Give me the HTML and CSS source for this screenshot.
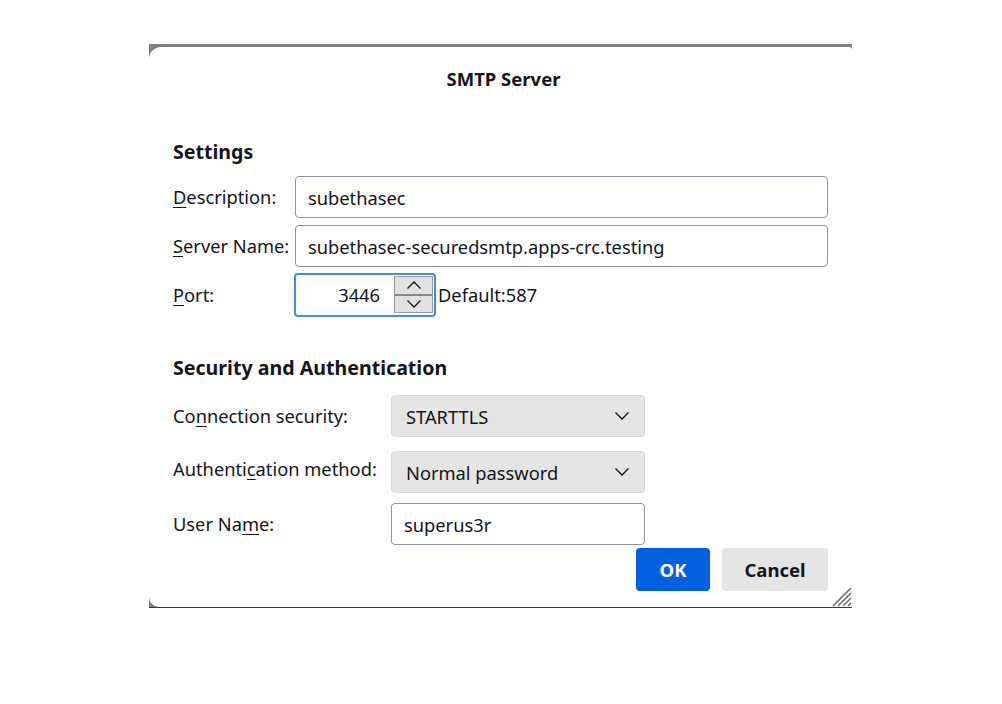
FILE: index.html
```html
<!DOCTYPE html>
<html>
<head>
<meta charset="utf-8">
<link rel="stylesheet" href="styles.css">
</head>
<body>
<div class="frame">
  <div class="dialog">
    <div class="title">SMTP Server</div>

    <div class="section-title first">Settings</div>
    <div class="settings">
      <label class="lbl"><u>D</u>escription:</label>
      <div class="textbox wide">subethasec</div>
      <label class="lbl"><u>S</u>erver Name:</label>
      <div class="textbox wide">subethasec-securedsmtp.apps-crc.testing</div>
      <label class="lbl"><u>P</u>ort:</label>
      <div class="port-row">
        <div class="port">
          <span class="port-val">3446</span>
          <div class="spin">
            <div class="spin-btn"><svg width="16" height="10" viewBox="0 0 16 10"><path d="M1.5 8.5 L8 2 L14.5 8.5" fill="none" stroke="#15141a" stroke-width="1.3"/></svg></div>
            <div class="spin-btn"><svg width="16" height="10" viewBox="0 0 16 10"><path d="M1.5 1.5 L8 8 L14.5 1.5" fill="none" stroke="#15141a" stroke-width="1.3"/></svg></div>
          </div>
        </div>
        <span class="default">Default:587</span>
      </div>
    </div>

    <div class="section-title second">Security and Authentication</div>
    <div class="security">
      <label class="lbl">Co<u>n</u>nection security:</label>
      <div class="select"><span>STARTTLS</span><svg width="16" height="10" viewBox="0 0 16 10"><path d="M1.5 1.5 L8 8 L14.5 1.5" fill="none" stroke="#15141a" stroke-width="1.4"/></svg></div>
      <label class="lbl auth">Authenti<u>c</u>ation method:</label>
      <div class="select"><span>Normal password</span><svg width="16" height="10" viewBox="0 0 16 10"><path d="M1.5 1.5 L8 8 L14.5 1.5" fill="none" stroke="#15141a" stroke-width="1.4"/></svg></div>
      <label class="lbl">User Na<u>m</u>e:</label>
      <div class="textbox">superus3r</div>
    </div>

    <div class="buttons">
      <button class="btn primary">OK</button>
      <button class="btn">Cancel</button>
    </div>
    <div class="grip"><svg width="22" height="22" viewBox="0 0 22 22"><path d="M21 3 L3 21 M21 8 L8 21 M21 13 L13 21 M21 18 L18 21" stroke="#6a6a6a" stroke-width="1.6"/></svg></div>
  </div>
</div>
</body>
</html>
```
FILE: styles.css
```css
* { box-sizing: border-box; }
body {
  margin: 0;
  background: #ffffff;
  font-family: "Noto Sans", "Open Sans", sans-serif;
  color: #15141a;
  font-size: 18.3px;
}
.frame {
  margin: 44px 0 0 149px;
  width: 703px;
  height: 564px;
  background: #7f7f7f;
  padding-top: 3px;
  border-bottom: 1px solid #3a3a3a;
}
.dialog {
  position: relative;
  width: 703px;
  height: 560px;
  background: #fff;
  border-radius: 12px 3px 0 10px;
  padding: 0 24px 0 24px;
}
.title {
  text-align: center;
  font-weight: 700;
  font-size: 18.5px;
  line-height: 24px;
  padding-top: 20px;
  padding-left: 6px;
}
.section-title {
  font-weight: 700;
  font-size: 19.6px;
  line-height: 26px;
}
.section-title.first { margin-top: 48px; }
.section-title.second { margin-top: 39px; }
.settings {
  display: grid;
  grid-template-columns: 122px 1fr;
  grid-auto-rows: 42px;
  row-gap: 7px;
  align-items: center;
  margin-top: 11px;
}
.lbl { line-height: 24px; }
u { text-decoration-thickness: 1px; text-underline-offset: 3px; }
.textbox {
  height: 42px;
  border: 1px solid #8f8f9d;
  border-radius: 4px;
  padding: 0 12px;
  display: flex;
  align-items: center;
  background: #fff;
}
.port-row {
  display: flex;
  align-items: center;
  margin-left: -1px;
  margin-top: -1px;
}
.port {
  width: 142px;
  height: 44px;
  border: 2px solid #3a8fe6;
  border-radius: 4px;
  display: flex;
  align-items: center;
  justify-content: flex-end;
  padding: 0 1px 0 0;
}
.port-val { margin-right: 14px; }
.spin {
  width: 39px;
  height: 37px;
  display: flex;
  flex-direction: column;
  border: 1px solid #9a9a9a;
  background: #e2e2e2;
}
.spin-btn {
  flex: 1;
  display: flex;
  align-items: center;
  justify-content: center;
}
.spin-btn + .spin-btn { border-top: 2px solid #8a8a8a; }
.default { margin-left: 2px; }
.security {
  display: grid;
  grid-template-columns: 218px 254px;
  align-items: center;
  margin-top: 14px;
}
.select {
  height: 42px;
  background: #e5e5e5;
  border: 1px solid #d6d6d6;
  border-radius: 4px;
  display: flex;
  align-items: center;
  justify-content: space-between;
  padding: 0 14px 0 14px;
}
.security > :nth-child(3), .security > :nth-child(4) { margin-top: 14px; }
.security > :nth-child(5), .security > :nth-child(6) { margin-top: 10px; }
.security > .auth { margin-top: 8px; }
.buttons {
  display: flex;
  justify-content: flex-end;
  gap: 12px;
  margin-top: 3px;
}
.btn {
  font-family: inherit;
  font-size: 18.5px;
  font-weight: 700;
  height: 43px;
  border: none;
  border-radius: 4px;
  background: #e5e5e5;
  color: #15141a;
  padding: 0;
}
.btn.primary {
  background: #0060df;
  color: #fff;
  width: 74px;
}
.btn:not(.primary) { width: 106px; }
.grip {
  position: absolute;
  right: 0;
  bottom: 0;
  width: 22px;
  height: 22px;
}
```
